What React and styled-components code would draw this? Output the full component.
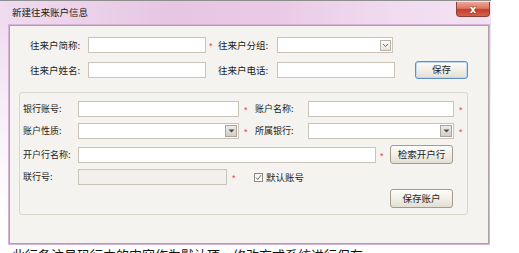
import React from "react";
import styled, { createGlobalStyle, css } from "styled-components";

const GlobalStyle = createGlobalStyle`
  html, body {
    margin: 0;
    padding: 0;
    background: #ffffff;
  }
  body {
    font-family: "Noto Sans CJK SC", "Liberation Sans", sans-serif;
    font-size: 9.5px;
    color: #1e1e1e;
  }
`;

const Window = styled.div`
  width: 491px;
  height: 245px;
  display: flex;
  flex-direction: column;
  background: linear-gradient(to bottom, #ecd6ec 0, #f1e0f1 40px, #faf3fa 140px, #ffffff 220px);
  border-top: 1px solid #8e8e8e;
  box-sizing: border-box;
`;

const TitleBar = styled.div`
  height: 23px;
  flex: none;
  display: flex;
  align-items: flex-start;
  justify-content: space-between;
  background: linear-gradient(90deg, #efdcef 0%, #e6c6e3 35%, #e9c9e6 55%, #f1dbf0 80%, #f3e2f3 100%);
`;

const Title = styled.div`
  padding: 5px 0 0 12px;
  font-size: 9.5px;
  color: #202020;
  line-height: 13px;
`;

const CloseButton = styled.div`
  width: 34px;
  height: 15px;
  margin: 1px 1px 0 0;
  box-sizing: border-box;
  border: 1px solid #8c4038;
  border-top: none;
  border-radius: 0 0 4px 4px;
  background: linear-gradient(to bottom, #eaa696 0%, #dc7665 45%, #c53c2c 55%, #d2624d 100%);
  display: flex;
  align-items: center;
  justify-content: center;
  color: #ffffff;
  font-family: "DejaVu Sans", sans-serif;
  font-weight: bold;
  font-size: 10px;
  text-shadow: 0 0 2px #6a2018;
`;

const Client = styled.div`
  flex: 1;
  margin-left: 8px;
  width: 482px;
  box-sizing: border-box;
  border: 1px solid #d7b4d7;
  box-shadow: inset 0 0 0 1px #a9a3a3;
  background: #f4f3ef;
  padding: 12px 0 0 10px;
`;

const TopForm = styled.div`
  display: flex;
  flex-direction: column;
  padding-left: 11px;
`;

const Row = styled.div`
  display: flex;
  align-items: center;
  height: ${(p) => p.$h || 16}px;
  margin-top: ${(p) => p.$mt || 0}px;
  ${(p) =>
    p.$end &&
    css`
      justify-content: flex-end;
      padding-right: 14px;
    `}
`;

const Label = styled.div`
  width: ${(p) => p.$w}px;
  flex: none;
  white-space: nowrap;
  font-size: ${(p) => p.$fs || 9.5}px;
  line-height: 16px;
`;

const inputBase = css`
  height: 16px;
  box-sizing: border-box;
  border: 1px solid #cbc3b8;
  background: #ffffff;
  flex: none;
`;

const Input = styled.div`
  ${inputBase}
  width: ${(p) => p.$w}px;
  ${(p) =>
    p.$disabled &&
    css`
      background: #f1f0ec;
      border-color: #c8c2b8;
    `}
`;

const Select = styled.div`
  ${inputBase}
  width: ${(p) => p.$w}px;
  display: flex;
  justify-content: flex-end;
  align-items: center;
  padding-right: 1px;
`;

const ChevronBox = styled.div`
  width: 11px;
  height: 11px;
  box-sizing: border-box;
  border: 1px solid #b9b3ab;
  background: linear-gradient(to bottom, #fbfbf9, #e6e3de);
  display: flex;
  align-items: center;
  justify-content: center;
`;

const ArrowBox = styled.div`
  width: 12px;
  height: 12px;
  box-sizing: border-box;
  border: 1px solid #a9a39b;
  background: linear-gradient(to bottom, #ecebe7, #d2cec6);
  display: flex;
  align-items: center;
  justify-content: center;
`;

const Star = styled.div`
  width: ${(p) => p.$w}px;
  flex: none;
  padding-left: ${(p) => p.$pl || 4}px;
  box-sizing: border-box;
  color: #e04848;
  font-family: "Liberation Sans", sans-serif;
  font-size: 9px;
  line-height: 16px;
  padding-top: 2px;
`;

const Button = styled.button`
  width: ${(p) => p.$w}px;
  height: ${(p) => p.$h}px;
  margin-left: ${(p) => p.$ml || 0}px;
  flex: none;
  padding: 0;
  box-sizing: border-box;
  border: 1px solid #a59b8c;
  border-radius: 3px;
  background: linear-gradient(to bottom, #fdfcfa 0%, #f2efe8 50%, #e3ded3 100%);
  font-family: "Noto Sans CJK SC", sans-serif;
  font-size: 9.5px;
  color: #1e1e1e;
  line-height: 1;
  ${(p) =>
    p.$focus &&
    css`
      border-color: #5f8fc4;
      box-shadow: inset 0 0 0 1px #bcd8f2;
    `}
`;

const Group = styled.div`
  margin-top: 13px;
  width: 449px;
  box-sizing: border-box;
  border: 1px solid #dbd7cd;
  border-radius: 3px;
  padding: 8px 0 6px 3px;
  display: flex;
  flex-direction: column;
`;

const CheckWrap = styled.label`
  display: flex;
  align-items: center;
  gap: 3px;
  font-size: 9.5px;
  line-height: 16px;
`;

const CheckBox = styled.span`
  width: 9px;
  height: 9px;
  box-sizing: border-box;
  border: 1px solid #8f8a82;
  background: linear-gradient(to bottom, #f2f1ee, #ffffff);
  display: flex;
  align-items: center;
  justify-content: center;
`;

const Note = styled.div`
  margin: 2px 0 0 12px;
  font-size: 13px;
  line-height: 16px;
  color: #111;
  white-space: nowrap;
`;

const Chevron = () => (
  <ChevronBox>
    <svg width="7" height="5" viewBox="0 0 7 5">
      <path d="M1 1 L3.5 3.5 L6 1" fill="none" stroke="#6a6a6a" strokeWidth="1" />
    </svg>
  </ChevronBox>
);

const Arrow = () => (
  <ArrowBox>
    <svg width="7" height="4" viewBox="0 0 7 4">
      <path d="M0.5 0.5 L6.5 0.5 L3.5 3.5 Z" fill="#4a4a4a" />
    </svg>
  </ArrowBox>
);

export default function App() {
  return (
    <>
      <GlobalStyle />
      <Window>
        <TitleBar>
          <Title>新建往来账户信息</Title>
          <CloseButton>x</CloseButton>
        </TitleBar>
        <Client>
          <TopForm>
            <Row>
              <Label $w={58}>往来户简称:</Label>
              <Input $w={118} />
              <Star $w={12} $pl={3}>*</Star>
              <Label $w={59}>往来户分组:</Label>
              <Select $w={116}>
                <Chevron />
              </Select>
            </Row>
            <Row $h={18} $mt={8}>
              <Label $w={58}>往来户姓名:</Label>
              <Input $w={118} />
              <Star $w={12} />
              <Label $w={59}>往来户电话:</Label>
              <Input $w={118} />
              <Button $w={53} $h={18} $ml={20} $focus>保存</Button>
            </Row>
          </TopForm>
          <Group>
            <Row>
              <Label $w={55} $fs={9}>银行账号:</Label>
              <Input $w={161} />
              <Star $w={16} $pl={5}>*</Star>
              <Label $w={53} $fs={9}>账户名称:</Label>
              <Input $w={146} />
              <Star $w={14} $pl={5}>*</Star>
            </Row>
            <Row $mt={6}>
              <Label $w={55} $fs={9}>账户性质:</Label>
              <Select $w={161}>
                <Arrow />
              </Select>
              <Star $w={16} $pl={5}>*</Star>
              <Label $w={53} $fs={9}>所属银行:</Label>
              <Select $w={146}>
                <Arrow />
              </Select>
              <Star $w={14} $pl={5}>*</Star>
            </Row>
            <Row $h={19} $mt={6}>
              <Label $w={55} $fs={9}>开户行名称:</Label>
              <Input $w={298} />
              <Star $w={14} $pl={4}>*</Star>
              <Button $w={63} $h={19}>检索开户行</Button>
            </Row>
            <Row $mt={5}>
              <Label $w={55} $fs={9}>联行号:</Label>
              <Input $w={149} $disabled />
              <Star $w={27} $pl={5}>*</Star>
              <CheckWrap>
                <CheckBox>
                  <svg width="7" height="7" viewBox="0 0 7 7">
                    <path d="M1 3.5 L2.8 5.5 L6 1.2" fill="none" stroke="#707070" strokeWidth="1" />
                  </svg>
                </CheckBox>
                默认账号
              </CheckWrap>
            </Row>
            <Row $h={19} $mt={4} $end>
              <Button $w={63} $h={19}>保存账户</Button>
            </Row>
          </Group>
        </Client>
      </Window>
      <Note>此行备注号码行中的内容作为默认项，修改方式系统进行保存</Note>
    </>
  );
}
